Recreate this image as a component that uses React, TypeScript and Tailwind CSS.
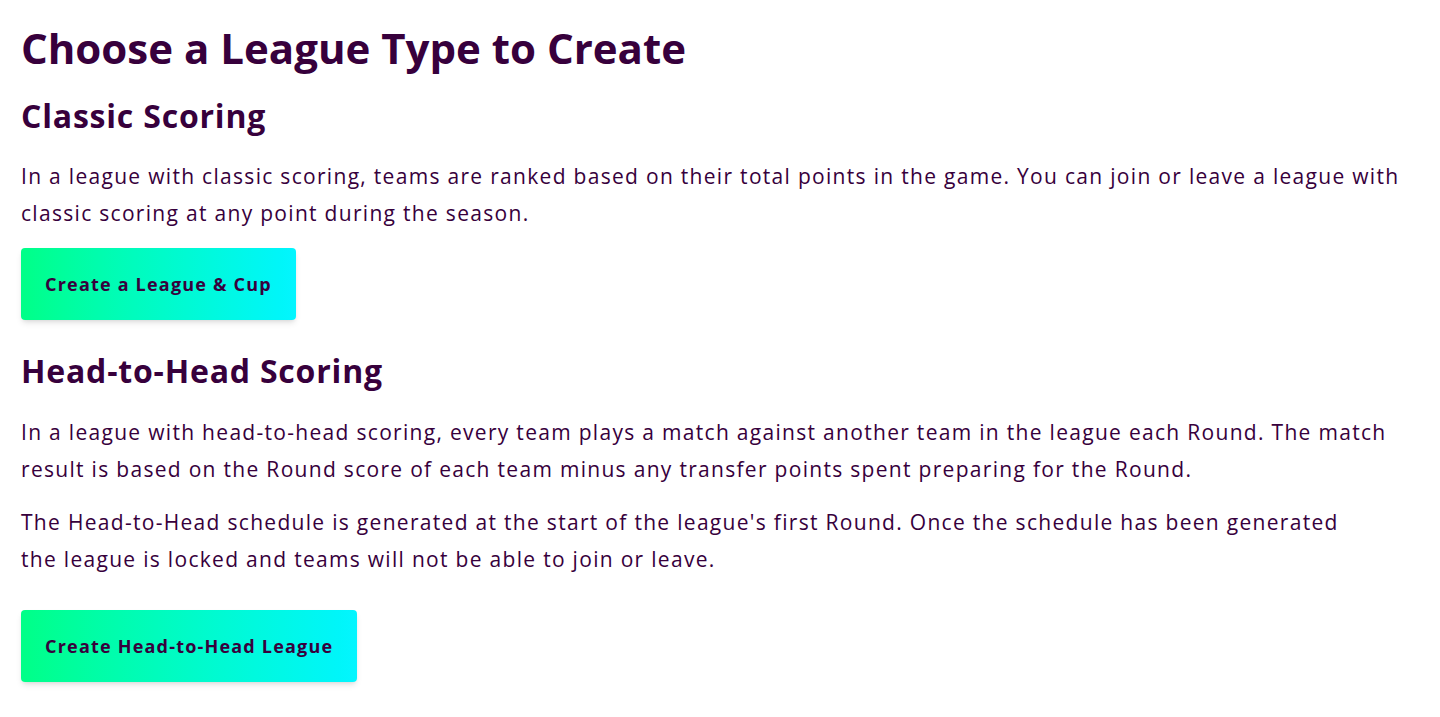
export default function App() {
  const font = { fontFamily: '"Open Sans", "Lato", sans-serif' };
  return (
    <div className="min-h-screen bg-white text-[#37003c] pl-[21px] pr-[21px] pt-6" style={font}>
      <h1 className="text-[42px] leading-[48px] font-bold">Choose a League Type to Create</h1>

      <h2 className="mt-6 text-[32px] leading-[40px] font-bold tracking-[0.8px]">Classic Scoring</h2>
      <p className="mt-[22px] text-[21px] leading-[37px] tracking-[1.3px]">
        In a league with classic scoring, teams are ranked based on their total points in the game. You can join or leave a
        league with classic scoring at any point during the season.
      </p>
      <button className="mt-[16px] h-[72px] px-6 rounded bg-gradient-to-r from-[#00ff87] to-[#04f5ff] text-[18px] font-bold tracking-[1.2px] text-[#37003c] shadow-md">
        Create a League &amp; Cup
      </button>

      <h2 className="mt-[31px] text-[32px] leading-[40px] font-bold tracking-[0.8px]">Head-to-Head Scoring</h2>
      <p className="mt-[23px] text-[21px] leading-[37px] tracking-[1.3px]">
        In a league with head-to-head scoring, every team plays a match against another team in the league each Round. The
        match result is based on the Round score of each team minus any transfer points spent preparing for the Round.
      </p>
      <p className="mt-[16px] text-[21px] leading-[37px] tracking-[1.3px]">
        The Head-to-Head schedule is generated at the start of the league's first Round. Once the schedule has been generated
        <br />
        the league is locked and teams will not be able to join or leave.
      </p>
      <button className="mt-[32px] h-[72px] px-6 rounded bg-gradient-to-r from-[#00ff87] to-[#04f5ff] text-[18px] font-bold tracking-[1.2px] text-[#37003c] shadow-md">
        Create Head-to-Head League
      </button>
    </div>
  );
}
